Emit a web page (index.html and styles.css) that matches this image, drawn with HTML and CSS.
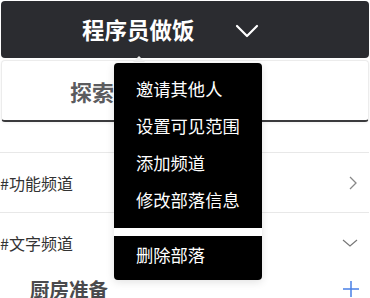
FILE: index.html
```html
<!DOCTYPE html>
<html lang="zh">
<head>
<meta charset="utf-8">
<link rel="stylesheet" href="styles.css">
</head>
<body>
<div class="app">
  <header class="header">
    <h1 class="title">程序员做饭</h1>
    <svg class="head-chev" width="24" height="14" viewBox="0 0 24 14"><path d="M2 2 L12 12 L22 2" fill="none" stroke="#fff" stroke-width="2.2" stroke-linecap="round" stroke-linejoin="round"/></svg>
  </header>
  <div class="card"><span class="card-text">探索</span></div>
  <div class="spacer"></div>
  <div class="row">
    <span class="row-text">#功能频道</span>
    <svg width="10" height="14" viewBox="0 0 10 14"><path d="M2 1 L8 7 L2 13" fill="none" stroke="#888" stroke-width="1.3"/></svg>
  </div>
  <div class="row">
    <span class="row-text">#文字频道</span>
    <svg width="16" height="10" viewBox="0 0 16 10"><path d="M1 2 L8 8 L15 2" fill="none" stroke="#777" stroke-width="1.2"/></svg>
  </div>
  <div class="group">
    <span class="group-text">厨房准备</span>
    <svg width="18" height="18" viewBox="0 0 18 18"><path d="M9 1 V17 M1 9 H17" fill="none" stroke="#4a80e6" stroke-width="1.5"/></svg>
  </div>

  <div class="pop-arrow"></div>
  <div class="menu">
    <ul class="menu-group first">
      <li class="menu-item">邀请其他人</li>
      <li class="menu-item">设置可见范围</li>
      <li class="menu-item">添加频道</li>
      <li class="menu-item">修改部落信息</li>
    </ul>
    <div class="menu-divider"></div>
    <ul class="menu-group last">
      <li class="menu-item">删除部落</li>
    </ul>
  </div>
</div>
</body>
</html>
```

FILE: styles.css
```css
html, body {
  margin: 0;
  padding: 0;
  background: #fff;
}
body {
  font-family: "Noto Sans CJK SC", "Noto Sans", sans-serif;
  width: 370px;
  height: 298px;
  overflow: hidden;
}
.app {
  position: relative;
  padding: 1px 1px 0 1px;
}
.header {
  height: 57px;
  background: #2b2c30;
  border-radius: 4px;
  display: flex;
  align-items: center;
  padding-left: 81px;
  gap: 40px;
}
.title {
  margin: 0;
  font-size: 22.5px;
  font-weight: 700;
  color: #fff;
  line-height: 1;
  letter-spacing: 0;
}
.head-chev {
  margin-top: 2px;
}
.card {
  margin-top: 2px;
  height: 59px;
  border: 1px solid #ececec;
  border-bottom: 2px solid #3b3b3d;
  border-radius: 4px;
  box-shadow: 0 1px 3px rgba(0,0,0,0.06);
  display: flex;
  align-items: center;
  padding-left: 68px;
}
.card-text {
  font-size: 22px;
  font-weight: 700;
  color: #5b5b5e;
  line-height: 1;
}
.spacer {
  height: 30px;
}
.row {
  height: 59px;
  border-top: 1px solid #e8e8e8;
  display: flex;
  align-items: center;
  justify-content: space-between;
  margin-left: -1px;
  padding-right: 11px;
}
.row-text {
  font-size: 16px;
  color: #333;
  line-height: 1;
}
.group {
  height: 30px;
  display: flex;
  align-items: center;
  justify-content: space-between;
  padding-left: 29px;
  padding-right: 9px;
  margin-top: 2px;
}
.group-text {
  font-size: 19.5px;
  font-weight: 700;
  color: #4a4a4d;
  line-height: 1;
}
.pop-arrow {
  position: absolute;
  left: 133px;
  top: 56px;
  width: 0;
  height: 0;
  border-left: 6px solid transparent;
  border-right: 6px solid transparent;
  border-bottom: 6px solid #f0f0f0;
}
.menu {
  position: absolute;
  left: 114px;
  top: 63px;
  width: 148px;
  background: #000;
  border-radius: 4px;
  box-shadow: 0 2px 8px rgba(0,0,0,0.12);
}
.menu-group {
  list-style: none;
  margin: 0;
  padding: 0;
}
.menu-group.first {
  padding: 7px 0 10px;
}
.menu-group.last {
  padding: 0 0 7px;
}
.menu-item {
  height: 37px;
  line-height: 37px;
  padding-left: 22px;
  font-size: 17.3px;
  color: #fff;
  white-space: nowrap;
}
.menu-divider {
  height: 8px;
  background: #fff;
}
```
